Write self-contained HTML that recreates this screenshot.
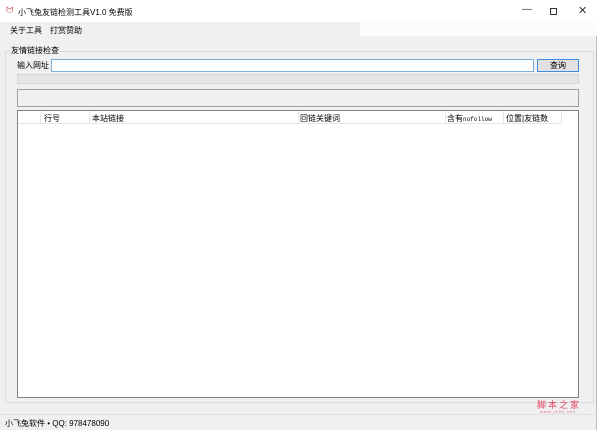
<!DOCTYPE html>
<html><head><style>
*{margin:0;padding:0;box-sizing:border-box}
body{width:600px;height:430px;background:#fff;font-family:"Liberation Sans","Noto Sans CJK SC",sans-serif;font-size:8px;color:#000;position:relative;overflow:hidden}
.a{position:absolute}
</style></head><body>
<div class="a" style="left:0;top:0;width:597px;height:430px;background:#f0f0f0;border-right:1px solid #bbb"></div>
<div class="a" style="left:0;top:0;width:597px;height:22px;background:#fff"></div>
<div class="a" style="left:6px;top:5px;font-size:9px;color:#c66">ᗢ</div>
<div class="a" style="left:18px;top:7px;font-size:8px">小飞兔友链检测工具V1.0 免费版</div>
<div class="a" style="left:522px;top:4px;font-size:10px;color:#333">—</div>
<div class="a" style="left:550px;top:8px;width:7px;height:7px;border:1px solid #333"></div>
<div class="a" style="left:578px;top:4px;font-size:11px;color:#333">✕</div>
<div class="a" style="left:0;top:22px;width:360px;height:14px;background:#f0f0f0"></div>
<div class="a" style="left:360px;top:22px;width:237px;height:14px;background:#fbfbfb"></div>
<div class="a" style="left:10px;top:25px">关于工具</div>
<div class="a" style="left:50px;top:25px">打赏赞助</div>
<div class="a" style="left:5px;top:51px;width:589px;height:352px;border:1px solid #dcdcdc"></div>
<div class="a" style="left:10px;top:45px;background:#f0f0f0;padding:0 1px">友情链接检查</div>
<div class="a" style="left:17px;top:60px">输入网址</div>
<div class="a" style="left:51px;top:59px;width:483px;height:13px;background:#fff;border:1px solid #7aaede"></div>
<div class="a" style="left:537px;top:59px;width:42px;height:13px;background:#e1e1e1;border:1px solid #3c8ddc;text-align:center;line-height:11px">查询</div>
<div class="a" style="left:17px;top:74px;width:562px;height:10px;background:#e6e6e6;border:1px solid #d6d6d6"></div>
<div class="a" style="left:17px;top:89px;width:562px;height:18px;border:1px solid #a0a0a0;background:#f0f0f0"></div>
<div class="a" style="left:17px;top:110px;width:562px;height:288px;background:#fff;border:1px solid #828282"></div>
<div class="a" style="left:18px;top:111px;width:544px;height:13px;border-bottom:1px solid #e5e5e5"></div>
<div class="a" style="left:40px;top:111px;width:1px;height:12px;background:#e5e5e5"></div>
<div class="a" style="left:89px;top:111px;width:1px;height:12px;background:#e5e5e5"></div>
<div class="a" style="left:298px;top:111px;width:1px;height:12px;background:#e5e5e5"></div>
<div class="a" style="left:445px;top:111px;width:1px;height:12px;background:#e5e5e5"></div>
<div class="a" style="left:503px;top:111px;width:1px;height:12px;background:#e5e5e5"></div>
<div class="a" style="left:561px;top:111px;width:1px;height:12px;background:#e5e5e5"></div>
<div class="a" style="left:44px;top:113px">行号</div>
<div class="a" style="left:92px;top:113px">本站链接</div>
<div class="a" style="left:300px;top:113px">回链关键词</div>
<div class="a" style="left:447px;top:113px">含有<span style="font-family:'Liberation Mono';font-size:6px">nofollow</span></div>
<div class="a" style="left:506px;top:113px">位置|友链数</div>
<div class="a" style="left:537px;top:398px;font-size:9px;color:#e04060;letter-spacing:2px">脚本之家</div>
<div class="a" style="left:540px;top:409px;font-size:4px;color:#e06080;letter-spacing:1px">www.jb51.net</div>
<div class="a" style="left:0;top:414px;width:597px;height:1px;background:#e0e0e0"></div>
<div class="a" style="left:5px;top:418px;font-size:8px">小飞兔软件 • QQ: 978478090</div>
</body></html>
